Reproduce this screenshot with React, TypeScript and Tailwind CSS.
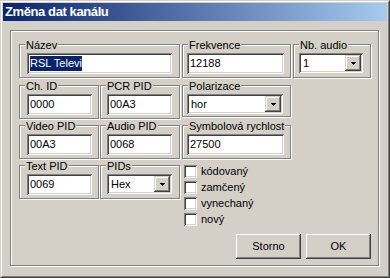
import React from "react";

const sunken =
  "shadow-[inset_1px_1px_0_#808080,inset_-1px_-1px_0_#ffffff,inset_2px_2px_0_#404040,inset_-2px_-2px_0_#d4d0c8]";
const raisedSmall =
  "shadow-[inset_-1px_-1px_0_#404040,inset_1px_1px_0_#d4d0c8,inset_-2px_-2px_0_#808080,inset_2px_2px_0_#ffffff]";
const raisedBtn =
  "shadow-[inset_-1px_-1px_0_#404040,inset_1px_1px_0_#ffffff,inset_-2px_-2px_0_#808080,inset_2px_2px_0_#d4d0c8]";
const etched = "border border-[#808080] shadow-[inset_1px_1px_0_#ffffff,1px_1px_0_#ffffff]";

function Group({
  label,
  className,
  children,
}: {
  label: string;
  className: string;
  children?: React.ReactNode;
}) {
  return (
    <div className={`relative shrink-0 ${etched} ${className}`}>
      <span className="absolute left-[5px] top-[-6px] px-px bg-[#d4d0c8] leading-[13px] whitespace-nowrap">
        {label}
      </span>
      {children}
    </div>
  );
}

function Edit({ className, children }: { className: string; children?: React.ReactNode }) {
  return (
    <div className={`h-[21px] bg-white ${sunken} flex items-center pl-[3px] leading-[13px] whitespace-nowrap overflow-hidden ${className}`}>
      {children}
    </div>
  );
}

function Combo({ className, value }: { className: string; value: string }) {
  return (
    <div className={`h-[20px] bg-white ${sunken} p-[2px] flex ${className}`}>
      <div className="flex-1 pl-[2px] leading-[16px]">{value}</div>
      <div className={`w-[16px] h-[16px] bg-[#d4d0c8] ${raisedSmall} flex items-center justify-center`}>
        <svg width="5" height="3" viewBox="0 0 5 3" shapeRendering="crispEdges">
          <polygon points="0,0 5,0 2.5,3" fill="#000" />
        </svg>
      </div>
    </div>
  );
}

function Check({ label }: { label: string }) {
  return (
    <div className="h-[16px] flex items-start">
      <div className={`w-[13px] h-[13px] bg-white ${sunken}`} />
      <span className="ml-[4px] leading-[13px]">{label}</span>
    </div>
  );
}

export default function App() {
  return (
    <div className="w-[390px] h-[278px] bg-[#d4d0c8] border border-t-[#d4d0c8] border-l-[#d4d0c8] border-r-[#404040] border-b-[#404040] text-[11px] text-black font-['Liberation_Sans',Arial,sans-serif]">
      <div className="h-full border border-t-white border-l-white border-r-[#808080] border-b-[#808080] p-px flex flex-col">
        <div className="h-[18px] bg-linear-to-r/srgb from-[#0a246a] to-[#a6caf0] flex items-center pl-[2px] text-white font-bold text-[13px] tracking-[-0.4px]">
          Změna dat kanálu
        </div>
        <div className={`ml-[7px] mt-[9px] w-[369px] h-[236px] ${etched} pl-[8px] pt-[13px] pr-[7px] flex flex-col`}>
          <div className="flex items-start">
            <Group label="Název" className="w-[161px] h-[34px] pl-[7px] pt-[8px]">
              <Edit className="w-[145px] pl-[2px]">
                <span className="bg-[#0a246a] text-white leading-[15px] h-[15px] inline-block">RSL Televi</span>
              </Edit>
            </Group>
            <Group label="Frekvence" className="ml-[2px] w-[109px] h-[34px] pl-[4px] pt-[8px]">
              <Edit className="w-[97px]">12188</Edit>
            </Group>
            <Group label="Nb. audio" className="ml-[2px] w-[78px] h-[34px] pl-[5px] pt-[8px]">
              <Combo className="w-[64px]" value="1" />
            </Group>
          </div>
          <div className="flex items-start mt-[7px]">
            <Group label="Ch. ID" className="w-[80px] h-[34px] pl-[7px] pt-[8px]">
              <Edit className="w-[65px]">0000</Edit>
            </Group>
            <Group label="PCR PID" className="ml-[1px] w-[80px] h-[34px] pl-[6px] pt-[8px]">
              <Edit className="w-[65px]">00A3</Edit>
            </Group>
            <Group label="Polarizace" className="ml-[2px] w-[109px] h-[32px] pl-[4px] pt-[8px]">
              <Combo className="w-[96px]" value="hor" />
            </Group>
          </div>
          <div className="flex items-start mt-[6px]">
            <Group label="Video PID" className="w-[80px] h-[34px] pl-[7px] pt-[8px]">
              <Edit className="w-[65px]">00A3</Edit>
            </Group>
            <Group label="Audio PID" className="ml-[1px] w-[80px] h-[34px] pl-[6px] pt-[8px]">
              <Edit className="w-[65px]">0068</Edit>
            </Group>
            <Group label="Symbolová rychlost" className="ml-[2px] w-[109px] h-[34px] pl-[4px] pt-[8px]">
              <Edit className="w-[97px]">27500</Edit>
            </Group>
          </div>
          <div className="flex items-start mt-[6px]">
            <Group label="Text PID" className="w-[80px] h-[34px] pl-[7px] pt-[8px]">
              <Edit className="w-[65px]">0069</Edit>
            </Group>
            <Group label="PIDs" className="ml-[1px] w-[80px] h-[34px] pl-[6px] pt-[8px]">
              <Combo className="w-[65px]" value="Hex" />
            </Group>
            <div className="ml-[4px] flex flex-col">
              <Check label="kódovaný" />
              <Check label="zamčený" />
              <Check label="vynechaný" />
              <Check label="nový" />
            </div>
          </div>
          <div className="mt-[5px] flex justify-end gap-[5px]">
            <div className={`w-[65px] h-[25px] bg-[#d4d0c8] ${raisedBtn} flex items-center justify-center`}>Storno</div>
            <div className={`w-[65px] h-[25px] bg-[#d4d0c8] ${raisedBtn} flex items-center justify-center`}>OK</div>
          </div>
        </div>
      </div>
    </div>
  );
}
